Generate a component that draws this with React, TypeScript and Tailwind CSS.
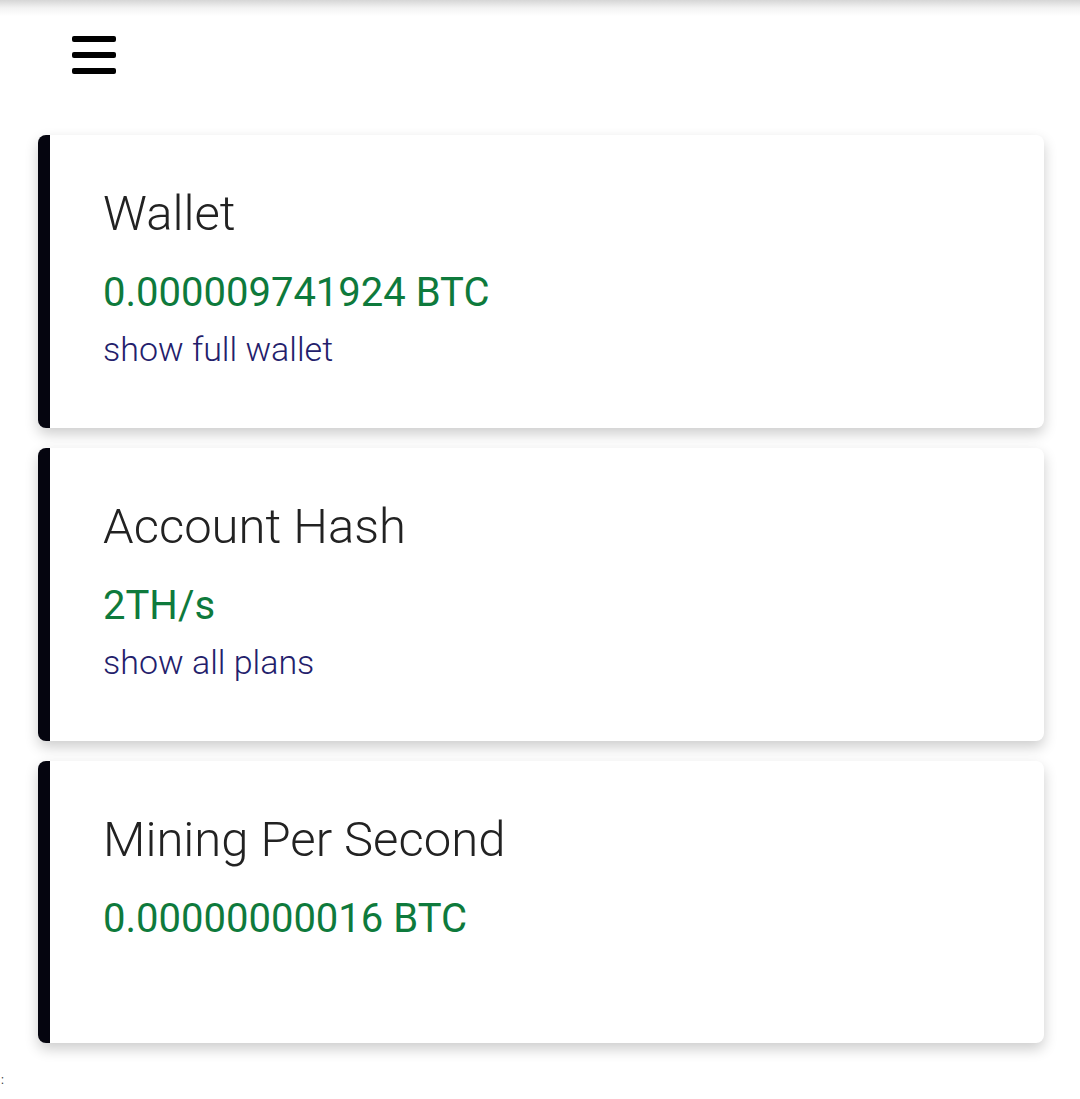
export default function App() {
  const cards = [
    { title: "Wallet", value: "0.000009741924 BTC", link: "show full wallet" },
    { title: "Account Hash", value: "2TH/s", link: "show all plans" },
    { title: "Mining Per Second", value: "0.00000000016 BTC", link: "" },
  ];

  return (
    <div className="min-h-[1099px] bg-white font-['Roboto',sans-serif]">
      <div className="h-4 bg-gradient-to-b from-[#d6d6d6] via-[#f3f3f3] to-white" />
      <div className="pl-[72px] pt-[20px] h-[119px]">
        <button className="flex flex-col gap-[10px] w-[44px]">
          <span className="block h-[6px] w-full rounded-[2px] bg-black" />
          <span className="block h-[6px] w-full rounded-[2px] bg-black" />
          <span className="block h-[6px] w-full rounded-[2px] bg-black" />
        </button>
      </div>

      <div className="flex flex-col gap-[20px] pl-[38px] pr-[36px]">
        {cards.map((card) => (
          <div
            key={card.title}
            className={
              "rounded-lg border-l-[12px] border-[#05050f] bg-white pl-[53px] pt-[51px] shadow-[0_6px_14px_rgba(0,0,0,0.2)] " +
              (card.link ? "h-[293px]" : "h-[282px]")
            }
          >
            <h2 className="text-[49px] font-light leading-[56px] text-[#222]">{card.title}</h2>
            <div className="mt-[27px] text-[40px] leading-[48px] text-[#0e7a3c]">{card.value}</div>
            {card.link && (
              <a className="mt-[12px] block text-[34px] font-light leading-[40px] text-[#23206b]">{card.link}</a>
            )}
          </div>
        ))}
      </div>
      <div className="mt-[30px] pl-[1px] text-[12px] leading-[14px] text-[#333]">:</div>
    </div>
  );
}
